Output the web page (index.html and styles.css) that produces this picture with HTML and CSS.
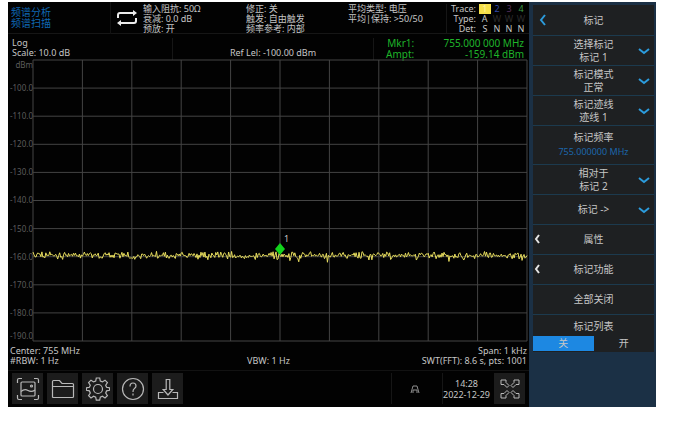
FILE: index.html
```html
<!DOCTYPE html>
<html lang="zh-CN">
<head>
    <meta charset="UTF-8">
    <meta name="viewport" content="width=device-width, initial-scale=1.0">
    <title>频谱分析</title>
    <link rel="stylesheet" href="styles.css">
</head>
<body>

    <div class="analyzer">
        <main class="main">
            <header class="status">
                <div class="mode">
                    <div>频谱分析</div>
                    <div>频谱扫描</div>
                </div>
                <svg class="sweep-icon" viewBox="0 0 22 18" aria-hidden="true">
                    <path d="M2 9V6q0-2 2-2h14M20 9v3q0 2-2 2H4" fill="none" stroke="#ececec" stroke-width="2"/>
                    <path d="M17 1l4 3-4 3zM5 11l-4 3 4 3z" fill="#ececec"/>
                </svg>
                <div class="params params-input">
                    <div>输入阻抗: 50Ω</div>
                    <div>衰减: 0.0 dB</div>
                    <div>预放: 开</div>
                </div>
                <div class="params params-trigger">
                    <div>修正: 关</div>
                    <div>触发: 自由触发</div>
                    <div>频率参考: 内部</div>
                </div>
                <div class="params params-average">
                    <div>平均类型: 电压</div>
                    <div>平均|保持: &gt;50/50</div>
                </div>
                <table class="traces">
                    <tr><th>Trace:</th><td class="trace-1">1</td><td class="trace-2">2</td><td class="trace-3">3</td><td class="trace-4">4</td></tr>
                    <tr><th>Type:</th><td>A</td><td class="off">W</td><td class="off">W</td><td class="off">W</td></tr>
                    <tr><th>Det:</th><td>S</td><td>N</td><td>N</td><td>N</td></tr>
                </table>
            </header>

            <section class="readout">
                <div class="scale">
                    <div>Log</div>
                    <div>Scale: 10.0 dB</div>
                </div>
                <div class="ref">Ref Lel: -100.00 dBm</div>
                <div class="marker-values">
                    <div class="marker-names">
                        <div>Mkr1:</div>
                        <div>Ampt:</div>
                    </div>
                    <div class="marker-numbers">
                        <div>755.000 000 MHz</div>
                        <div>-159.14 dBm</div>
                    </div>
                </div>
            </section>

            <section class="chart">
                <div class="axis">
                    <span>dBm</span>
                    <span>-100.0</span>
                    <span>-110.0</span>
                    <span>-120.0</span>
                    <span>-130.0</span>
                    <span>-140.0</span>
                    <span>-150.0</span>
                    <span>-160.0</span>
                    <span>-170.0</span>
                    <span>-180.0</span>
                    <span>-190.0</span>
                </div>
                <div class="plot">
                    <svg class="plot-area" viewBox="0 0 1000 100" preserveAspectRatio="none">
                        <g id="grid"></g>
                        <polyline id="trace"></polyline>
                    </svg>
                    <div class="marker">
                        <svg viewBox="0 0 10 12" aria-hidden="true"><path d="M5 0l5 6-5 6-5-6z" fill="#12d41c"/></svg>
                        <span>1</span>
                    </div>
                </div>
            </section>

            <section class="sweep">
                <div>
                    <div>Center: 755 MHz</div>
                    <div>#RBW: 1 Hz</div>
                </div>
                <div class="vbw">VBW: 1 Hz</div>
                <div class="span">
                    <div>Span: 1 kHz</div>
                    <div>SWT(FFT): 8.6 s, pts: 1001</div>
                </div>
            </section>

            <footer class="toolbar">
                <button class="tool" type="button" aria-label="截图">
                    <svg viewBox="0 0 24 24">
                        <path d="M1.500 6V3q0-1.500 1.500-1.500h3M18 1.500h3q1.500 0 1.500 1.500v3M22.500 18v3q0 1.500-1.500 1.500h-3M6 22.500H3q-1.500 0-1.500-1.500v-3"/>
                        <rect x="5" y="5" width="14" height="14" rx="1"/>
                        <path d="M5 14.500q3.500-3 7-1t7-.5"/>
                        <circle cx="15.500" cy="9" r="1"/>
                    </svg>
                </button>
                <button class="tool" type="button" aria-label="文件">
                    <svg viewBox="0 0 24 24">
                        <path d="M1.500 20.500V4.500q0-1 1-1h6l2.500 3h10.500q1 0 1 1v12q0 1-1 1h-19q-1 0-1-1zM1.500 9.500h21"/>
                    </svg>
                </button>
                <button class="tool" type="button" aria-label="设置">
                    <svg viewBox="0 0 24 24">
                        <path d="M10.300 1h3.400l.6 3 2.100.9 2.600-1.700 2.400 2.400-1.700 2.600.9 2.100 3 .6v2.400l-3 .6-.9 2.100 1.700 2.600-2.400 2.400-2.600-1.700-2.100.9-.6 3h-3.400l-.6-3-2.100-.9L5 21l-2.400-2.400L4.300 16l-.9-2.100-3-.6v-2.400l3-.6.9-2.100-1.700-2.600L5 3.200l2.600 1.700L9.700 4z"/>
                        <circle cx="12" cy="12" r="4.500"/>
                    </svg>
                </button>
                <button class="tool" type="button" aria-label="帮助">
                    <svg viewBox="0 0 24 24">
                        <circle cx="12" cy="12" r="10.500"/>
                        <path d="M9 9.500q0-3.500 3-3.500t3 3q0 1.500-1.600 2.600T12 15M12 16.500V18.500"/>
                    </svg>
                </button>
                <button class="tool" type="button" aria-label="保存">
                    <svg viewBox="0 0 24 24">
                        <path d="M10.200 2.500h3.600v10h3L12 18 7.200 12.500h3zM7.500 15.500h-5v6h19v-6h-5"/>
                    </svg>
                </button>
                <div class="sweep-mode">
                    <svg viewBox="0 0 10 10" aria-label="连续扫描"><path d="M1 9L3 2h4l2 7M3 6h4M3 6v3M7 6v3"/></svg>
                </div>
                <div class="clock">
                    <div>14:28</div>
                    <div>2022-12-29</div>
                </div>
                <button class="tool" type="button" aria-label="全屏">
                    <svg class="expand" viewBox="0 0 24 24">
                        <path d="M3 3h5v2.500l3 3L9 10.500l-3-3H3z"/>
                        <path d="M21 3h-5v2.500l-3 3 2 2 3-3h3z"/>
                        <path d="M3 21h5v-2.500l3-3-2-2-3 3H3z"/>
                        <path d="M21 21h-5v-2.500l-3-3 2-2 3 3h3z"/>
                    </svg>
                </button>
            </footer>
        </main>

        <nav class="menu">
            <div class="menu-title">
                <button class="back" type="button" aria-label="返回">
                    <svg viewBox="0 0 8 12"><path d="M6 1L2 6l4 5"/></svg>
                </button>
                <h1>标记</h1>
            </div>

            <div class="item">
                <label for="markerSelect">选择标记</label>
                <select id="markerSelect">
                    <option>标记 1</option>
                    <option>标记 2</option>
                </select>
                <svg class="down" viewBox="0 0 12 8"><path d="M1 2l5 4 5-4"/></svg>
            </div>
            <div class="item">
                <label for="markerMode">标记模式</label>
                <select id="markerMode">
                    <option>正常</option>
                </select>
                <svg class="down" viewBox="0 0 12 8"><path d="M1 2l5 4 5-4"/></svg>
            </div>
            <div class="item">
                <label for="markerTrace">标记迹线</label>
                <select id="markerTrace">
                    <option>迹线 1</option>
                </select>
                <svg class="down" viewBox="0 0 12 8"><path d="M1 2l5 4 5-4"/></svg>
            </div>
            <div class="item item-tall">
                <label for="markerFreq">标记频率</label>
                <input id="markerFreq" type="text" value="755.000000 MHz">
            </div>
            <div class="item">
                <label for="markerRelative">相对于</label>
                <select id="markerRelative">
                    <option>标记 2</option>
                </select>
                <svg class="down" viewBox="0 0 12 8"><path d="M1 2l5 4 5-4"/></svg>
            </div>
            <button class="item" type="button">
                <span>标记 -&gt;</span>
                <svg class="down" viewBox="0 0 12 8"><path d="M1 2l5 4 5-4"/></svg>
            </button>
            <button class="item" type="button">
                <svg class="left" viewBox="0 0 8 12"><path d="M6 2L3 6l3 4"/></svg>
                <span>属性</span>
            </button>
            <button class="item" type="button">
                <svg class="left" viewBox="0 0 8 12"><path d="M6 2L3 6l3 4"/></svg>
                <span>标记功能</span>
            </button>
            <button class="item" type="button">
                <span>全部关闭</span>
            </button>
            <fieldset class="list-switch">
                <legend>标记列表</legend>
                <div class="switch">
                    <input type="radio" id="listOff" name="list" checked>
                    <label for="listOff">关</label>
                    <input type="radio" id="listOn" name="list">
                    <label for="listOn">开</label>
                </div>
            </fieldset>
        </nav>
    </div>

    <script src="script.js"></script>
</body>
</html>
```

FILE: styles.css
```css
* {
    box-sizing: border-box;
}
body {
    margin: 0;
    padding: 2px 21px 14px 8px;
    min-height: 100vh;
    display: flex;
    background-color: #ffffff;
    color: #c6c6c6;
    font-family: "Noto Sans", "Noto Sans CJK SC", sans-serif;
    font-size: 9px;
    line-height: 10px;
}
button, select, input {
    margin: 0;
    padding: 0;
    border: none;
    border-radius: 0;
    background: none;
    color: inherit;
    font: inherit;
}
button {
    cursor: pointer;
}
svg {
    display: block;
}
.analyzer {
    flex: 1;
    display: flex;
    background-color: #020202;
}
.main {
    flex: 1;
    min-width: 0;
    display: flex;
    flex-direction: column;
}

/* top status bar */
.status {
    display: grid;
    grid-template-columns: 103px 32px 103px 102px 1fr auto;
    height: 32px;
    border-bottom: 1px solid #161616;
    white-space: nowrap;
}
.mode {
    padding: 5px 0 0 3px;
    border-right: 1px solid #121212;
    color: #0f68b4;
    font-size: 10px;
    line-height: 11px;
}
.sweep-icon {
    width: 22px;
    height: 18px;
    margin: 7px 0 0 5px;
}
.params {
    padding-top: 2px;
}
.traces {
    border-collapse: collapse;
    margin: 2px 2px 0 0;
    border-left: 1px solid #161616;
}
.traces th {
    padding: 0 3px 0 4px;
    font-weight: normal;
    text-align: right;
}
.traces td {
    width: 12px;
    padding: 0;
    text-align: center;
}
.traces .trace-1 {
    background-color: #f7e04a;
    color: #fff3a0;
}
.traces .trace-2 {
    color: #3148a8;
}
.traces .trace-3 {
    color: #55305f;
}
.traces .trace-4 {
    color: #3f9a45;
}
.traces .off {
    color: #2b2b2b;
}

/* scale and marker readout */
.readout {
    display: grid;
    grid-template-columns: 165px 1fr 155px;
    height: 26px;
    padding-top: 4px;
}
.scale {
    padding-left: 4px;
    border-right: 1px solid #161616;
}
.ref {
    padding-top: 10px;
    text-align: center;
    border-right: 1px solid #161616;
}
.marker-values {
    display: flex;
    justify-content: space-between;
    padding: 0 5px 0 12px;
    color: #1fb52a;
    font-size: 10px;
    line-height: 11px;
}
.marker-names, .marker-numbers {
    text-align: right;
}

/* spectrum chart */
.chart {
    flex: 1;
    display: flex;
    min-height: 200px;
    padding-right: 2px;
}
.axis {
    width: 25px;
    display: grid;
    grid-template-rows: 1fr repeat(9, 2fr) 1fr;
    align-items: center;
    justify-items: end;
    color: #5c5c5c;
    font-size: 8px;
}
.axis span:first-child {
    align-self: start;
}
.axis span:last-child {
    align-self: end;
}
.plot {
    position: relative;
    flex: 1;
}
.plot-area {
    width: 100%;
    height: 100%;
    overflow: visible;
}
.plot-area line {
    stroke: #444444;
    stroke-width: 1;
    vector-effect: non-scaling-stroke;
}
.plot-area polyline {
    fill: none;
    stroke: #e6dc5e;
    stroke-width: 1;
    vector-effect: non-scaling-stroke;
}
.marker {
    position: absolute;
    left: 50%;
    top: 65%;
}
.marker svg {
    width: 10px;
    height: 12px;
    margin-left: -5px;
}
.marker span {
    position: absolute;
    left: 4px;
    top: -9px;
}

/* sweep settings under the chart */
.sweep {
    display: grid;
    grid-template-columns: 1fr auto 1fr;
    padding: 5px 2px 4px;
    white-space: nowrap;
}
.vbw {
    padding-top: 10px;
}
.span {
    text-align: right;
}

/* bottom toolbar */
.toolbar {
    display: flex;
    gap: 4px;
    height: 37px;
    padding: 2px 4px 3px;
    border-top: 1px solid #121212;
}
.tool {
    width: 31px;
    display: grid;
    place-items: center;
    background-color: #1c1c1c;
}
.tool svg {
    width: 24px;
    height: 24px;
    fill: none;
    stroke: #b8b8b8;
    stroke-width: 1.2;
}
.tool .expand {
    stroke-width: 1;
}
.sweep-mode {
    width: 47px;
    margin-left: auto;
    display: grid;
    place-items: center;
    border-left: 1px solid #161616;
}
.sweep-mode svg {
    width: 10px;
    height: 10px;
    fill: none;
    stroke: #8f8f8f;
}
.clock {
    padding: 5px 0 0;
    border-left: 1px solid #161616;
    text-align: center;
    line-height: 11px;
}

/* right side menu */
.menu {
    width: 127px;
    display: flex;
    flex-direction: column;
    padding: 3px 2px 0 4px;
    background-color: #1b3045;
    font-size: 10px;
    line-height: 13px;
}
.menu-title, .item, .list-switch {
    position: relative;
    height: 30px;
    display: flex;
    flex-direction: column;
    align-items: center;
    justify-content: center;
    background-color: #1e2022;
    border-bottom: 1px solid #1c3a4e;
}
.menu-title h1 {
    margin: 0;
    font-size: 10px;
    font-weight: normal;
}
.item select {
    width: 60px;
    height: 13px;
    appearance: none;
    text-align: center;
    text-align-last: center;
}
.menu-title {
    height: 31px;
}
.item-tall {
    height: 39px;
}
.item-tall input {
    width: 100%;
    height: 16px;
    color: #1c66aa;
    font-size: 9px;
    text-align: center;
}
.menu path {
    fill: none;
    stroke: #2c9bdc;
    stroke-width: 2;
}
.back {
    position: absolute;
    left: 6px;
    top: 9px;
}
.back svg {
    width: 8px;
    height: 12px;
}
.down {
    position: absolute;
    right: 4px;
    top: 11px;
    width: 12px;
    height: 8px;
}
.left {
    position: absolute;
    left: 0;
    top: 8px;
    width: 8px;
    height: 12px;
}
.menu .left path {
    stroke: #e4e4e4;
}
.list-switch {
    height: 37px;
    margin: 0;
    padding: 5px 0 0;
    border-width: 0;
    display: block;
}
.list-switch legend {
    float: left;
    width: 100%;
    padding: 0;
    text-align: center;
}
.switch {
    display: flex;
    clear: both;
    padding-top: 3px;
}
.switch input {
    position: absolute;
    opacity: 0;
}
.switch label {
    flex: 1;
    height: 15px;
    line-height: 15px;
    text-align: center;
}
.switch input:checked + label {
    background-color: #1d88e2;
}
```

FILE: script.js
```js
const SVG_NS = 'http://www.w3.org/2000/svg';

// 10 x 10 grid
const grid = document.getElementById('grid');
function addLine(x1, y1, x2, y2) {
    const line = document.createElementNS(SVG_NS, 'line');
    line.setAttribute('x1', x1);
    line.setAttribute('y1', y1);
    line.setAttribute('x2', x2);
    line.setAttribute('y2', y2);
    grid.appendChild(line);
}
for (let i = 0; i <= 10; i++) {
    addLine(i * 100, 0, i * 100, 100);
    addLine(0, i * 10, 1000, i * 10);
}

let seed = 17;
function random() {
    seed = (seed * 16807) % 2147483647;
    return seed / 2147483647;
}
const points = [];
for (let x = 0; x <= 1000; x += 2) {
    let level = 69.5 + (random() + random() - 1) * 1.5;
    if (random() > 0.95) {
        level += 1.2;
    }
    points.push(x + ',' + level.toFixed(2));
}
document.getElementById('trace').setAttribute('points', points.join(' '));
```
